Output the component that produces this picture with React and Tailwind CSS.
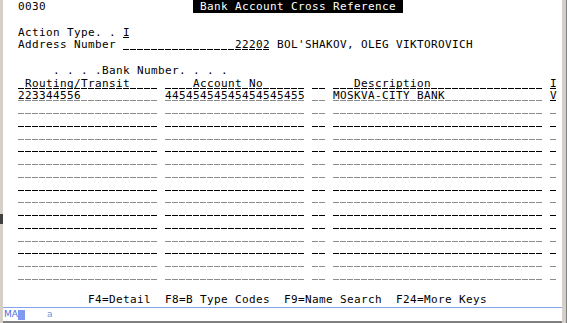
import React from "react";

// 5250 green-screen style panel, one row = 12.75px, one column = 7px
const ULK =
  "whitespace-pre bg-[repeating-linear-gradient(90deg,#000_0_6px,transparent_6px_7px)] bg-no-repeat bg-[length:100%_1px] bg-[position:0_11px]";
const ULG =
  "whitespace-pre bg-[repeating-linear-gradient(90deg,#8c8c8c_0_6px,transparent_6px_7px)] bg-no-repeat bg-[length:100%_1px] bg-[position:0_11px]";

const Row = ({ children }) => (
  <div className="h-[12.75px] leading-[12.75px] whitespace-pre">{children}</div>
);

const F = ({ dark, children }) => <span className={dark ? ULK : ULG}>{children}</span>;

const GridRow = ({ dark, routing = "", account = "", desc = "", flag = "" }) => (
  <Row>
    {"  "}
    <F dark={dark}>{routing.padEnd(20, " ")}</F>
    {" "}
    <F dark={dark}>{account.padEnd(20, " ")}</F>
    {" "}
    <F dark={dark}>{"  "}</F>
    {" "}
    <F dark={dark}>{desc.padEnd(30, " ")}</F>
    {" "}
    <F dark={dark}>{flag.padEnd(1, " ")}</F>
  </Row>
);

// which blank rows came out dark in the capture
const blankRows = [false, true, false, true, false, false, true, false, true, true, false, true, false, false];

export default function App() {
  return (
    <div className="w-[567px] h-[323px] flex bg-white overflow-hidden">
      {/* left frame */}
      <div className="w-[3px] flex flex-col bg-[#d4d0c8]">
        <div className="h-[214px]" />
        <div className="h-[10px] bg-[#404040]" />
      </div>

      <div className="flex-1 flex flex-col">
        <div className="flex-1 pl-[1px] pt-[1px] font-['DejaVu_Sans_Mono',monospace] text-[11px] tracking-[0.377px] text-black">
          <Row>
            {"  0030                     "}
            <span className="bg-black text-white">{" Bank Account Cross Reference "}</span>
          </Row>
          <Row> </Row>
          <Row>
            {"  Action Type. . "}
            <F dark>I</F>
          </Row>
          <Row>
            {"  Address Number "}
            <F dark>{"                22202"}</F>
            {" BOL'SHAKOV, OLEG VIKTOROVICH"}
          </Row>
          <Row> </Row>
          <Row>{"       . . . .Bank Number. . . ."}</Row>
          <GridRow dark routing=" Routing/Transit" account="    Account No" desc="   Description" flag="I" />
          <Row>
            {"  "}
            <F>{"223344556           "}</F>
            {" "}
            <F>{"44545454545454545455"}</F>
            {" "}
            <F>{"  "}</F>
            {" "}
            <F>{"MOSKVA-CITY BANK              "}</F>
            {" "}
            <F dark>V</F>
          </Row>
          {blankRows.map((dark, i) => (
            <GridRow key={i} dark={dark} />
          ))}
          <Row> </Row>
          <Row>{"            F4=Detail  F8=B Type Codes  F9=Name Search  F24=More Keys"}</Row>
        </div>

        {/* operator information area */}
        <div className="h-[14px] border-t-[1px] border-[#86a2ec] flex items-center font-['DejaVu_Sans',sans-serif] text-[9px] text-[#4f6fe0]">
          <span className="pl-[1px] w-[15px]">MA</span>
          <span className="w-[7px] h-[10px] bg-[#7f9af0]" />
          <span className="pl-[22px] text-[#7a90e0]">a</span>
        </div>
        <div className="h-[2px] bg-[#808080]" />
      </div>

      {/* right frame */}
      <div className="w-[4px] bg-[#d4d0c8]" />
      <div className="w-[1px] bg-[#808080]" />
    </div>
  );
}
